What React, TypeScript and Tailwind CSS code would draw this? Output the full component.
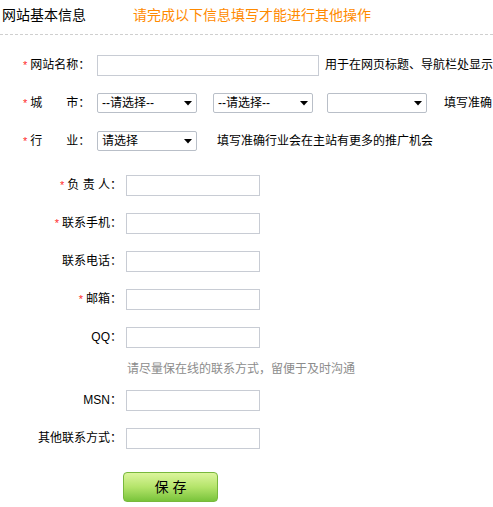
import React from 'react';

const font = { fontFamily: '"Liberation Sans", "Noto Sans CJK SC", sans-serif' };

function Star() {
  return <span className="text-[#ff2a2a] text-[11px] mr-[3px]">*</span>;
}

function FakeSelect({ text, className = '' }: { text?: string; className?: string }) {
  return (
    <div
      className={`flex h-[20px] w-[100px] shrink-0 items-center justify-between rounded-[2px] border border-[#b9bfc8] bg-white pl-[4px] pr-[4px] ${className}`}
    >
      <span className="leading-none whitespace-nowrap">{text ?? ''}</span>
      <svg width="8" height="5" viewBox="0 0 8 5">
        <path d="M0 0 H8 L4 4.5 Z" fill="#000" />
      </svg>
    </div>
  );
}

// rows of the contact block: label on the right edge, input after it
const contacts: { label: string; required?: boolean; hint?: string }[] = [
  { label: '负 责 人：', required: true },
  { label: '联系手机：', required: true },
  { label: '联系电话：' },
  { label: '邮箱：', required: true },
  { label: 'QQ：', hint: '请尽量保在线的联系方式，留便于及时沟通' },
  { label: 'MSN：' },
  { label: '其他联系方式：' },
];

export default function App() {
  return (
    <div className="h-[507px] w-[493px] overflow-hidden bg-white text-[12px] text-black" style={font}>
      {/* header */}
      <div className="flex h-[35px] items-start border-b border-dashed border-[#cfcfcf] pt-[6px] text-[14px] leading-[18px] whitespace-nowrap">
        <span className="ml-[2px] w-[131px]">网站基本信息</span>
        <span className="text-[#ff8a00]">请完成以下信息填写才能进行其他操作</span>
      </div>

      {/* basic site info */}
      <div className="mt-[11px]">
        <div className="flex h-[38px] items-center whitespace-nowrap">
          <div className="flex w-[97px] items-center pl-[23px]">
            <Star />
            <span>网站名称：</span>
          </div>
          <div className="h-[21px] w-[222px] shrink-0 border border-[#c8ccd4] bg-white" />
          <span className="ml-[6px]">用于在网页标题、导航栏处显示</span>
        </div>

        <div className="flex h-[38px] items-center whitespace-nowrap">
          <div className="flex w-[97px] items-center pl-[23px]">
            <Star />
            <span className="flex w-[60px] justify-between">
              <span>城</span>
              <span className="w-[24px]">市：</span>
            </span>
          </div>
          <FakeSelect text="--请选择--" />
          <FakeSelect text="--请选择--" className="ml-[16px]" />
          <FakeSelect className="ml-[14px]" />
          <span className="ml-[17px]">填写准确</span>
        </div>

        <div className="flex h-[38px] items-center whitespace-nowrap">
          <div className="flex w-[97px] items-center pl-[23px]">
            <Star />
            <span className="flex w-[60px] justify-between">
              <span>行</span>
              <span className="w-[24px]">业：</span>
            </span>
          </div>
          <FakeSelect text="请选择" />
          <span className="ml-[20px]">填写准确行业会在主站有更多的推广机会</span>
        </div>
      </div>

      {/* contact info */}
      <div className="mt-[6px]">
        {contacts.map((row) => (
          <React.Fragment key={row.label}>
            <div className="flex h-[38px] items-center whitespace-nowrap">
              <div className="flex w-[122px] items-center justify-end">
                {row.required && <Star />}
                <span className="whitespace-pre">{row.label}</span>
              </div>
              <div className="ml-[4px] h-[21px] w-[134px] shrink-0 border border-[#c8ccd4] bg-white" />
            </div>
            {row.hint && (
              <div className="flex h-[25px] items-center pl-[127px] text-[#8c8c8c] whitespace-nowrap">{row.hint}</div>
            )}
          </React.Fragment>
        ))}
      </div>

      <button
        type="button"
        className="mt-[15px] ml-[123px] flex h-[30px] w-[95px] items-center justify-center rounded-[4px] border border-[#78b83c] bg-gradient-to-b from-[#dcf59c] via-[#b4e46a] to-[#79c43a] text-[14px] text-black"
      >
        保 存
      </button>
    </div>
  );
}
